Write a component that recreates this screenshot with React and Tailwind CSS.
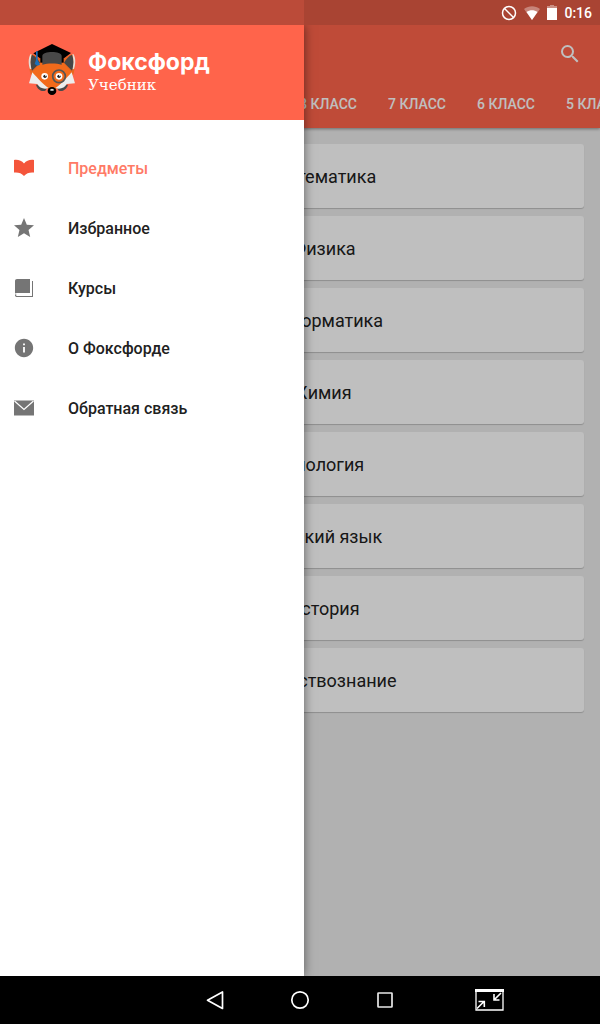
import { MdSearch, MdStar, MdInfo } from "react-icons/md";

const grades = ["11 класс", "10 класс", "9 класс", "8 класс", "7 класс", "6 класс", "5 класс"];

const subjects = [
    "Математика",
    "Физика",
    "Информатика",
    "Химия",
    "Биология",
    "Русский язык",
    "История",
    "Обществознание",
];

const menu = [
    { label: "Предметы", icon: BookOpenIcon, active: true },
    { label: "Избранное", icon: StarIcon },
    { label: "Курсы", icon: CoursesIcon },
    { label: "О Фоксфорде", icon: AboutIcon },
    { label: "Обратная связь", icon: MailIcon },
];

function BookOpenIcon() {
    return (
        <svg viewBox="0 0 24 24" className="size-6" fill="#f4553b">
            <path d="M2 4c4-.6 7.500.5 10 3.500C14.500 4.500 18 3.400 22 4v12.500c-4-.5-7.500.5-10 3.500-2.500-3-6-4-10-3.500z" />
        </svg>
    );
}

function StarIcon() {
    return <MdStar className="size-6 text-[#757575]" />;
}

function CoursesIcon() {
    return (
        <svg viewBox="0 0 24 24" className="size-6" fill="#757575">
            <path d="M5 3h13v14H5c-.8 0-1.500.2-2 .6V5c0-1.200.8-2 2-2z" />
            <path d="M20 5h1v16H5c-1.200 0-2-.8-2-1.800S3.800 18 4.500 18.200c-.5.200-.6 1.800.5 1.800h15z" />
        </svg>
    );
}

function AboutIcon() {
    return <MdInfo className="size-6 p-px text-[#757575]" />;
}

function MailIcon() {
    return (
        <svg viewBox="0 0 24 24" className="size-6">
            <path d="M2 4.500h20v15H2z" fill="#757575" />
            <path d="M2.500 5L12 13.500 21.500 5" fill="none" stroke="#fff" strokeWidth="1.200" />
        </svg>
    );
}

function FoxLogo() {
    return (
        <svg viewBox="0 0 192 192" className="size-16">
            {/* lower fur */}
            <path d="M48 146c8 0 26 2 34 8l-6 10c-12 4-24-4-28-18zM144 146c-8 0-26 2-34 8l6 10c12 4 24-4 28-18z" fill="#4a4a4a" />
            {/* ears */}
            <path d="M34 54c-10 16-8 38-2 62l30 4 14-38C64 68 48 58 34 54z" fill="#e9661f" />
            <path d="M158 54c10 16 8 38 2 62l-30 4-14-38c12-14 28-24 42-28z" fill="#e9661f" />
            <path d="M32 54c-9 14-6 34-2 46l5-2c-4-14-4-28 0-43zM160 54c9 14 6 34 2 46l-5-2c4-14 4-28 0-43z" fill="#e6ddd6" />
            <path d="M36 56c-6 14-5 32 0 48l24-24c-6-11-14-20-24-24zM156 56c6 14 5 32 0 48l-24-24c6-11 14-20 24-24z" fill="#464646" />
            {/* head */}
            <path d="M62 80h68l26 30-10 26-36 22-14 8-14-8-36-22-10-26z" fill="#f26a1b" />
            <path d="M37 109l-10 33 25 2c6 12 20 17 34 12C74 150 54 128 37 109z" fill="#ededed" />
            <path d="M155 109l10 33-25 2c-6 12-20 17-34 12C118 150 138 128 155 109z" fill="#ededed" />
            <circle cx="74" cy="121" r="10" fill="#fff" />
            <circle cx="75" cy="121" r="5" fill="#222" />
            <circle cx="77" cy="119" r="2" fill="#fff" />
            <circle cx="117" cy="121" r="10" fill="#fff" />
            <circle cx="117" cy="121" r="5" fill="#222" />
            <circle cx="119" cy="119" r="2" fill="#fff" />
            <circle cx="117" cy="121" r="19" fill="none" stroke="#555" strokeWidth="5" />
            <ellipse cx="96" cy="165" rx="13" ry="12" fill="#000" />
            <path d="M91 160q5-4 10 0v4H91z" fill="#ddd" />
            {/* cap */}
            <path d="M96 24l57 27-21 16H60L40 52z" fill="#000" />
            <path d="M61 64h70v16H61z" fill="#000" />
            <path d="M67 60c0-16 58-16 58 0v26c-15-5-43-5-58 0z" fill="#484848" />
            <path d="M48 46v26l-4 12 8 5 8-3-7-14V46z" fill="#1b6fba" />
        </svg>
    );
}

function StatusBar() {
    return (
        <div className="flex h-[25px] bg-[#a94433] font-medium text-white">
            <div className="w-[304px] bg-[#bb4b39]" />
            <div className="flex flex-1 items-center justify-end gap-[7px] pr-2">
                <svg viewBox="0 0 16 16" className="size-4" fill="none" stroke="#fff" strokeWidth="1.500">
                    <circle cx="8" cy="8" r="6.500" />
                    <path d="M3.500 3.500l9 9" />
                </svg>
                <svg viewBox="0 0 16 14" className="h-3.5 w-4" fill="#fff">
                    <path d="M0 3C5-.7 11-.7 16 3L8 14z" opacity=".35" />
                    <path d="M2.500 6c3.500-2.500 7.500-2.500 11 0L8 14z" />
                </svg>
                <svg viewBox="0 0 10 15" className="h-[15px] w-2.5" fill="#fff">
                    <path d="M3 0h4v1h3v3H0V1h3z" opacity=".4" />
                    <path d="M0 3h10v12H0z" />
                </svg>
                <span className="text-sm">0:16</span>
            </div>
        </div>
    );
}

function Drawer() {
    return (
        <aside className="absolute inset-y-0 left-0 w-[304px] bg-white shadow-[0_0_10px_rgba(0,0,0,0.5)]">
            <div className="flex h-[95px] items-start bg-[#ff644b] pt-[11px] pl-5 text-white">
                <FoxLogo />
                <div className="flex flex-col gap-px pt-3.5 pl-1">
                    <span className="font-['Inter'] text-[23px] leading-6 font-bold">Фоксфорд</span>
                    <span className="font-['DejaVu_Serif'] text-[15px] leading-5">Учебник</span>
                </div>
            </div>
            <nav className="flex flex-col pt-[18px]">
                {menu.map(({ label, icon: Icon, active }) => (
                    <a
                        key={label}
                        href="#"
                        className={`flex h-[60px] items-center gap-8 px-3 text-base font-medium ${active ? "text-[#ff7a66]" : "text-[#212121]"}`}
                    >
                        <Icon />
                        <span className="pt-0.5">{label}</span>
                    </a>
                ))}
            </nav>
        </aside>
    );
}

function NavBar() {
    return (
        <div className="flex h-12 items-center bg-black">
            <div className="flex-1" />
            <div className="flex gap-[61px]">
                <button type="button" aria-label="Назад">
                    <svg viewBox="0 0 24 24" className="size-6" fill="none" stroke="#fff" strokeWidth="1.700" strokeLinejoin="round">
                        <path d="M19.500 4v16.500L4.500 12.200z" />
                    </svg>
                </button>
                <button type="button" aria-label="Домой">
                    <svg viewBox="0 0 24 24" className="size-6" fill="none" stroke="#fff" strokeWidth="1.700">
                        <circle cx="12" cy="12" r="8.200" />
                    </svg>
                </button>
                <button type="button" aria-label="Недавние">
                    <svg viewBox="0 0 24 24" className="size-6" fill="none" stroke="#e8e8e8" strokeWidth="1.700">
                        <rect x="5" y="5" width="14" height="14" rx="0.500" />
                    </svg>
                </button>
            </div>
            <div className="flex flex-1">
                <button type="button" aria-label="Свернуть" className="ml-[78px]">
                    <svg viewBox="0 0 29 22" className="h-[22px] w-[29px]" fill="none" stroke="#fff" strokeWidth="1.300">
                        <path d="M1 1v20h27V1z" />
                        <path d="M0 1.500h29" strokeWidth="3" />
                        <path d="M2 19.500l7-7M3.500 12.500H9.300V18M26 4l-7 7M19 5v6h5.500" strokeWidth="1.600" />
                    </svg>
                </button>
            </div>
        </div>
    );
}

export default function App() {
    return (
        <div className="flex min-h-screen flex-col overflow-hidden font-['Roboto',sans-serif]">
            <StatusBar />
            <div className="relative flex flex-1 flex-col overflow-hidden bg-[#ededed]">
                <header className="bg-[#ff644b] text-white shadow-[0_1px_3px_rgba(0,0,0,0.4)]">
                    <div className="flex h-[55px] items-center justify-end px-[18px] pt-0.5">
                        <button type="button" aria-label="Поиск">
                            <MdSearch className="size-6" />
                        </button>
                    </div>
                    <div className="flex h-12 overflow-hidden pl-4">
                        {grades.map((grade) => (
                            <button key={grade} type="button" className="w-[89px] shrink-0 pl-4 text-left text-sm font-medium uppercase first:pl-0">
                                {grade}
                            </button>
                        ))}
                    </div>
                </header>
                <main className="flex flex-col gap-2 p-4">
                    {subjects.map((subject) => (
                        <a
                            key={subject}
                            href="#"
                            className="flex h-16 items-center justify-center rounded-[3px] bg-white pt-0.5 pl-12 text-lg text-[#212121] shadow-[0_1px_1px_rgba(0,0,0,0.2)]"
                        >
                            {subject}
                        </a>
                    ))}
                </main>
                <div className="absolute inset-0 bg-black/25" />
                <Drawer />
            </div>
            <NavBar />
        </div>
    );
}
